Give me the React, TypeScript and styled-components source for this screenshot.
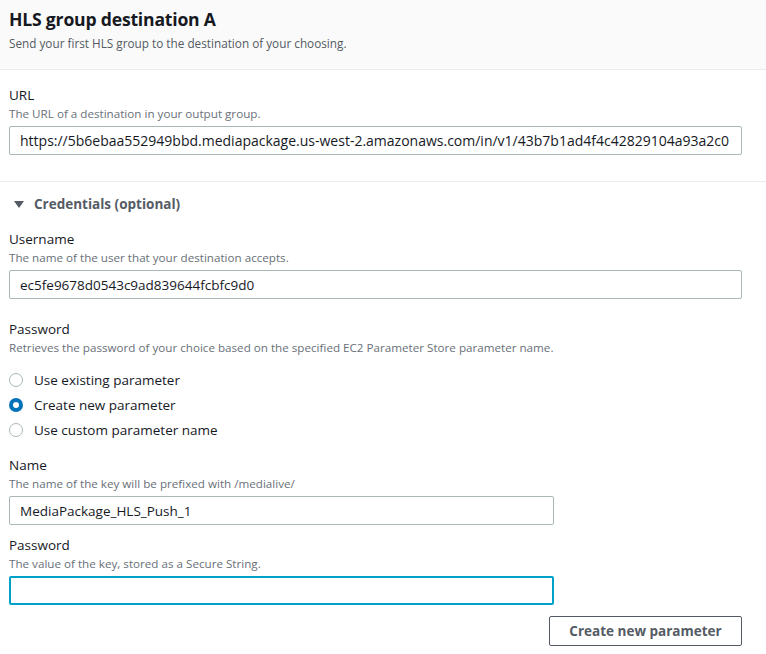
import React from 'react'
import styled, { createGlobalStyle } from 'styled-components'

const GlobalStyle = createGlobalStyle`
  html, body {
    margin: 0;
    padding: 0;
    background: #ffffff;
  }
  body {
    font-family: 'Open Sans', 'Noto Sans', Arial, sans-serif;
    color: #16191f;
  }
  * {
    box-sizing: border-box;
  }
`

const Page = styled.div`
  width: 766px;
  min-height: 654px;
  background: #fff;
`

const Header = styled.header`
  height: 70px;
  padding: 7px 9px 0;
  background: #fafafa;
  border-bottom: 1px solid #eaeded;
`

const Title = styled.h2`
  margin: 0;
  font-size: 17.6px;
  line-height: 24px;
  font-weight: 700;
  color: #16191f;
  letter-spacing: -0.2px;
`

const Subtitle = styled.p`
  margin: 4px 0 0;
  font-size: 11.75px;
  line-height: 16px;
  color: #545b64;
`

const Section = styled.section<{ divided?: boolean }>`
  padding: ${({ divided }) => (divided ? '16px' : '13px')} 24px 26px 9px;
  border-bottom: ${({ divided }) => (divided ? '1px solid #eaeded' : 'none')};
`

const Field = styled.div<{ gap?: number }>`
  display: flex;
  flex-direction: column;
  margin-top: ${({ gap }) => gap ?? 0}px;
`

const Label = styled.label`
  font-size: 13.5px;
  line-height: 18px;
  color: #16191f;
`

const Description = styled.span`
  margin-top: 2px;
  font-size: 11.65px;
  line-height: 15px;
  color: #687078;
`

const Input = styled.div<{ width?: number; focused?: boolean; size?: number }>`
  margin-top: 5px;
  width: ${({ width }) => (width ? `${width}px` : '100%')};
  height: 29px;
  padding: 0 10px;
  display: flex;
  align-items: center;
  border: ${({ focused }) => (focused ? '2px solid #00a1c9' : '1px solid #aab7b8')};
  border-radius: 2px;
  background: #fff;
  font-size: ${({ size }) => size ?? 13.5}px;
  color: #16191f;
  white-space: nowrap;
  overflow: hidden;
`

const Expander = styled.div`
  display: flex;
  align-items: center;
  gap: 10px;
  padding-left: 5px;
  font-size: 13.5px;
  font-weight: 700;
  color: #545b64;
`

const Caret = styled.span`
  width: 0;
  height: 0;
  border-left: 5px solid transparent;
  border-right: 5px solid transparent;
  border-top: 7px solid #545b64;
`

const RadioGroup = styled.div`
  display: flex;
  flex-direction: column;
  gap: 7px;
  margin-top: 16px;
`

const RadioRow = styled.div`
  display: flex;
  align-items: center;
  gap: 11px;
  font-size: 13.5px;
  line-height: 18px;
  color: #16191f;
`

const RadioDot = styled.span<{ checked?: boolean }>`
  width: 14px;
  height: 14px;
  border-radius: 50%;
  flex-shrink: 0;
  border: ${({ checked }) => (checked ? '4px solid #0073bb' : '1px solid #aab7b8')};
  background: #fff;
`

const Actions = styled.div`
  display: flex;
  justify-content: flex-end;
  margin-top: 11px;
`

const Button = styled.button`
  width: 193px;
  height: 30px;
  border: 1px solid #545b64;
  border-radius: 2px;
  background: #fff;
  font-family: inherit;
  font-size: 13.5px;
  font-weight: 700;
  color: #545b64;
`

const radios = [
  { label: 'Use existing parameter', checked: false },
  { label: 'Create new parameter', checked: true },
  { label: 'Use custom parameter name', checked: false },
]

export default function App() {
  return (
    <Page>
      <GlobalStyle />
      <Header>
        <Title>HLS group destination A</Title>
        <Subtitle>Send your first HLS group to the destination of your choosing.</Subtitle>
      </Header>

      <Section divided>
        <Field>
          <Label>URL</Label>
          <Description>The URL of a destination in your output group.</Description>
          <Input size={14}>
            https://5b6ebaa552949bbd.mediapackage.us-west-2.amazonaws.com/in/v1/43b7b1ad4f4c42829104a93a2c0
          </Input>
        </Field>
      </Section>

      <Section>
        <Expander>
          <Caret />
          Credentials (optional)
        </Expander>

        <Field gap={17}>
          <Label>Username</Label>
          <Description>The name of the user that your destination accepts.</Description>
          <Input>ec5fe9678d0543c9ad839644fcbfc9d0</Input>
        </Field>

        <Field gap={21}>
          <Label>Password</Label>
          <Description>
            Retrieves the password of your choice based on the specified EC2 Parameter Store parameter name.
          </Description>
          <RadioGroup>
            {radios.map(r => (
              <RadioRow key={r.label}>
                <RadioDot checked={r.checked} />
                {r.label}
              </RadioRow>
            ))}
          </RadioGroup>
        </Field>

        <Field gap={17}>
          <Label>Name</Label>
          <Description>The name of the key will be prefixed with /medialive/</Description>
          <Input width={545}>MediaPackage_HLS_Push_1</Input>
        </Field>

        <Field gap={11}>
          <Label>Password</Label>
          <Description>The value of the key, stored as a Secure String.</Description>
          <Input width={545} focused />
        </Field>

        <Actions>
          <Button>Create new parameter</Button>
        </Actions>
      </Section>
    </Page>
  )
}
